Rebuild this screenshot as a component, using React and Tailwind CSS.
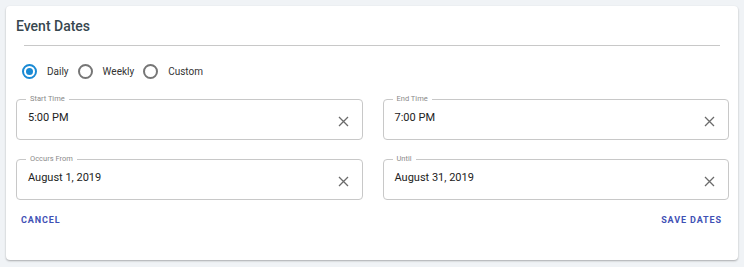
import React, { useState } from 'react';

const ClearIcon = () => (
  <svg width="11" height="11" viewBox="0 0 11 11" fill="none" stroke="#6b6b6b" strokeWidth="1.3">
    <path d="M1 1 L10 10 M10 1 L1 10" />
  </svg>
);

const Radio = ({ checked, label, onClick }) => (
  <button type="button" onClick={onClick} className="flex items-center gap-[10px] h-[20px]">
    <span
      className={`w-[15px] h-[15px] rounded-full border-2 flex items-center justify-center ${
        checked ? 'border-[#1a8ad4]' : 'border-[#767676]'
      }`}
    >
      {checked && <span className="w-[7px] h-[7px] rounded-full bg-[#1a8ad4]" />}
    </span>
    <span className="text-[10px] text-[#333]">{label}</span>
  </button>
);

const OutlinedField = ({ label, value }) => (
  <div className="relative h-[41px] border border-[#c8c8c8] rounded-[4px] flex items-center justify-between pl-[11px] pr-[13px]">
    <span className="absolute -top-[6px] left-[9px] px-[4px] bg-white text-[7.5px] leading-[10px] text-[#8a8a8a]">
      {label}
    </span>
    <span className="text-[11px] text-[#222] -mt-[3px]">{value}</span>
    <span className="mt-[4px]">
      <ClearIcon />
    </span>
  </div>
);

const App = () => {
  const [mode, setMode] = useState('daily');

  return (
    <div className="w-[744px] h-[267px] bg-[#f0f3f6] pt-[6px] pl-[6px] pr-[6px] font-['Roboto',sans-serif]">
      <div className="w-[732px] h-[254px] bg-white rounded-[4px] shadow-[0_1px_2px_rgba(0,0,0,0.3)] px-[10px] pt-[10px]">
        {/* Title */}
        <h2 className="text-[14px] leading-[20px] font-medium text-[#37474f]">Event Dates</h2>
        <div className="mx-[8px] mt-[9px] h-px bg-[#c8c8c8]" />

        {/* Repeat mode */}
        <div className="flex items-center gap-[9px] mt-[15px] pl-[6px]">
          <Radio checked={mode === 'daily'} label="Daily" onClick={() => setMode('daily')} />
          <Radio checked={mode === 'weekly'} label="Weekly" onClick={() => setMode('weekly')} />
          <Radio checked={mode === 'custom'} label="Custom" onClick={() => setMode('custom')} />
        </div>

        {/* Fields */}
        <div className="grid grid-cols-2 gap-x-[20px] gap-y-[19px] mt-[18px] w-[713px]">
          <OutlinedField label="Start Time" value="5:00 PM" />
          <OutlinedField label="End Time" value="7:00 PM" />
          <OutlinedField label="Occurs From" value="August 1, 2019" />
          <OutlinedField label="Until" value="August 31, 2019" />
        </div>

        {/* Actions */}
        <div className="flex justify-between mt-[14px] px-[5px] pr-[6px]">
          <button className="text-[9px] font-bold tracking-[0.1em] text-[#3f51b5]">CANCEL</button>
          <button className="text-[9px] font-bold tracking-[0.1em] text-[#3f51b5]">SAVE DATES</button>
        </div>
      </div>
    </div>
  );
};

export default App;
